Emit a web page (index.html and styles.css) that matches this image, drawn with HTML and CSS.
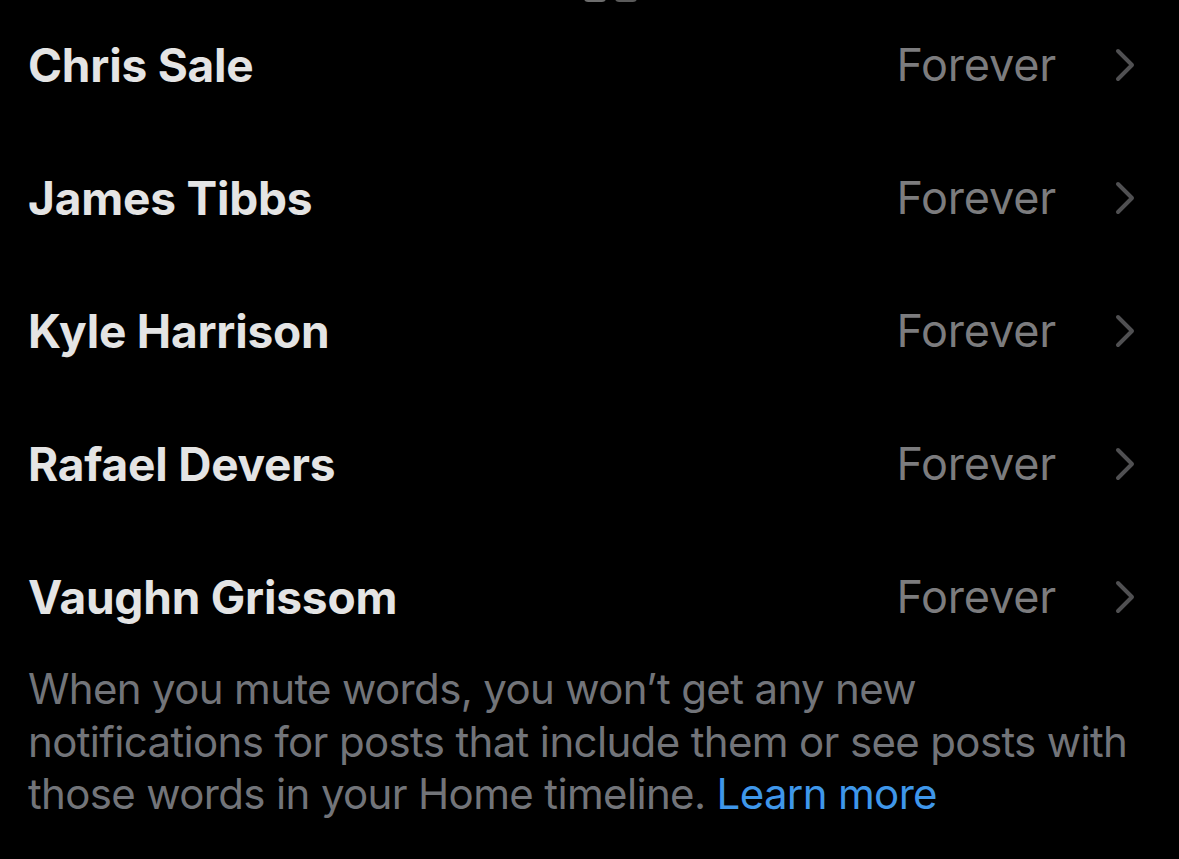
FILE: index.html
```html
<!DOCTYPE html>
<html lang="en">
<head>
<meta charset="utf-8">
<title>Muted words</title>
<link rel="stylesheet" href="styles.css">
</head>
<body>
<div class="screen">
  <div class="cutoff"><span class="tail tail-a"></span><span class="tail tail-b"></span></div>
  <ul class="list">
    <li class="row"><span class="name">Chris Sale</span><span class="meta"><span class="dur">Forever</span><svg class="chev" viewBox="0 0 24 34" width="24" height="34"><path d="M5 3 L19 17 L5 31" fill="none" stroke="currentColor" stroke-width="4" stroke-linecap="round" stroke-linejoin="round"/></svg></span></li>
    <li class="row"><span class="name">James Tibbs</span><span class="meta"><span class="dur">Forever</span><svg class="chev" viewBox="0 0 24 34" width="24" height="34"><path d="M5 3 L19 17 L5 31" fill="none" stroke="currentColor" stroke-width="4" stroke-linecap="round" stroke-linejoin="round"/></svg></span></li>
    <li class="row"><span class="name">Kyle Harrison</span><span class="meta"><span class="dur">Forever</span><svg class="chev" viewBox="0 0 24 34" width="24" height="34"><path d="M5 3 L19 17 L5 31" fill="none" stroke="currentColor" stroke-width="4" stroke-linecap="round" stroke-linejoin="round"/></svg></span></li>
    <li class="row"><span class="name">Rafael Devers</span><span class="meta"><span class="dur">Forever</span><svg class="chev" viewBox="0 0 24 34" width="24" height="34"><path d="M5 3 L19 17 L5 31" fill="none" stroke="currentColor" stroke-width="4" stroke-linecap="round" stroke-linejoin="round"/></svg></span></li>
    <li class="row"><span class="name">Vaughn Grissom</span><span class="meta"><span class="dur">Forever</span><svg class="chev" viewBox="0 0 24 34" width="24" height="34"><path d="M5 3 L19 17 L5 31" fill="none" stroke="currentColor" stroke-width="4" stroke-linecap="round" stroke-linejoin="round"/></svg></span></li>
  </ul>
  <p class="note">When you mute words, you won’t get any new notifications for posts that include them or see posts with those words in your Home timeline. <a class="link" href="#">Learn more</a></p>
</div>
</body>
</html>
```

FILE: styles.css
```css
* { box-sizing: border-box; }
html, body {
  margin: 0;
  padding: 0;
  background: #000;
}
body {
  font-family: Inter, "Noto Sans", "Liberation Sans", sans-serif;
  color: #e7e9ea;
  width: 1179px;
  height: 859px;
  overflow: hidden;
}
.screen {
  position: relative;
  padding: 0 42px 0 28px;
}
.cutoff {
  position: absolute;
  top: 0;
  left: 584px;
  display: flex;
  gap: 9px;
}
.tail {
  display: block;
  height: 4px;
  border-radius: 0 0 12px 12px;
  background: #6d6d6d;
}
.tail-a { width: 22px; }
.tail-b { width: 22px; background: #5a5a5a; }
.list {
  list-style: none;
  margin: -2px 0 0 0;
  padding: 0;
}
.row {
  height: 133px;
  display: flex;
  align-items: center;
  justify-content: space-between;
}
.name {
  font-size: 46px;
  font-weight: 700;
  letter-spacing: -0.2px;
  color: #e4e4e4;
}
.meta {
  display: flex;
  align-items: center;
  gap: 57px;
}
.dur {
  font-size: 45px;
  font-weight: 400;
  color: #7c7c7e;
  letter-spacing: -0.2px;
}
.chev {
  color: #505052;
  display: block;
}
.note {
  margin: 0;
  width: 1116px;
  font-size: 42px;
  line-height: 52.5px;
  color: #727479;
  letter-spacing: -0.65px;
}
.link {
  color: #3f97ea;
  text-decoration: none;
}
```
